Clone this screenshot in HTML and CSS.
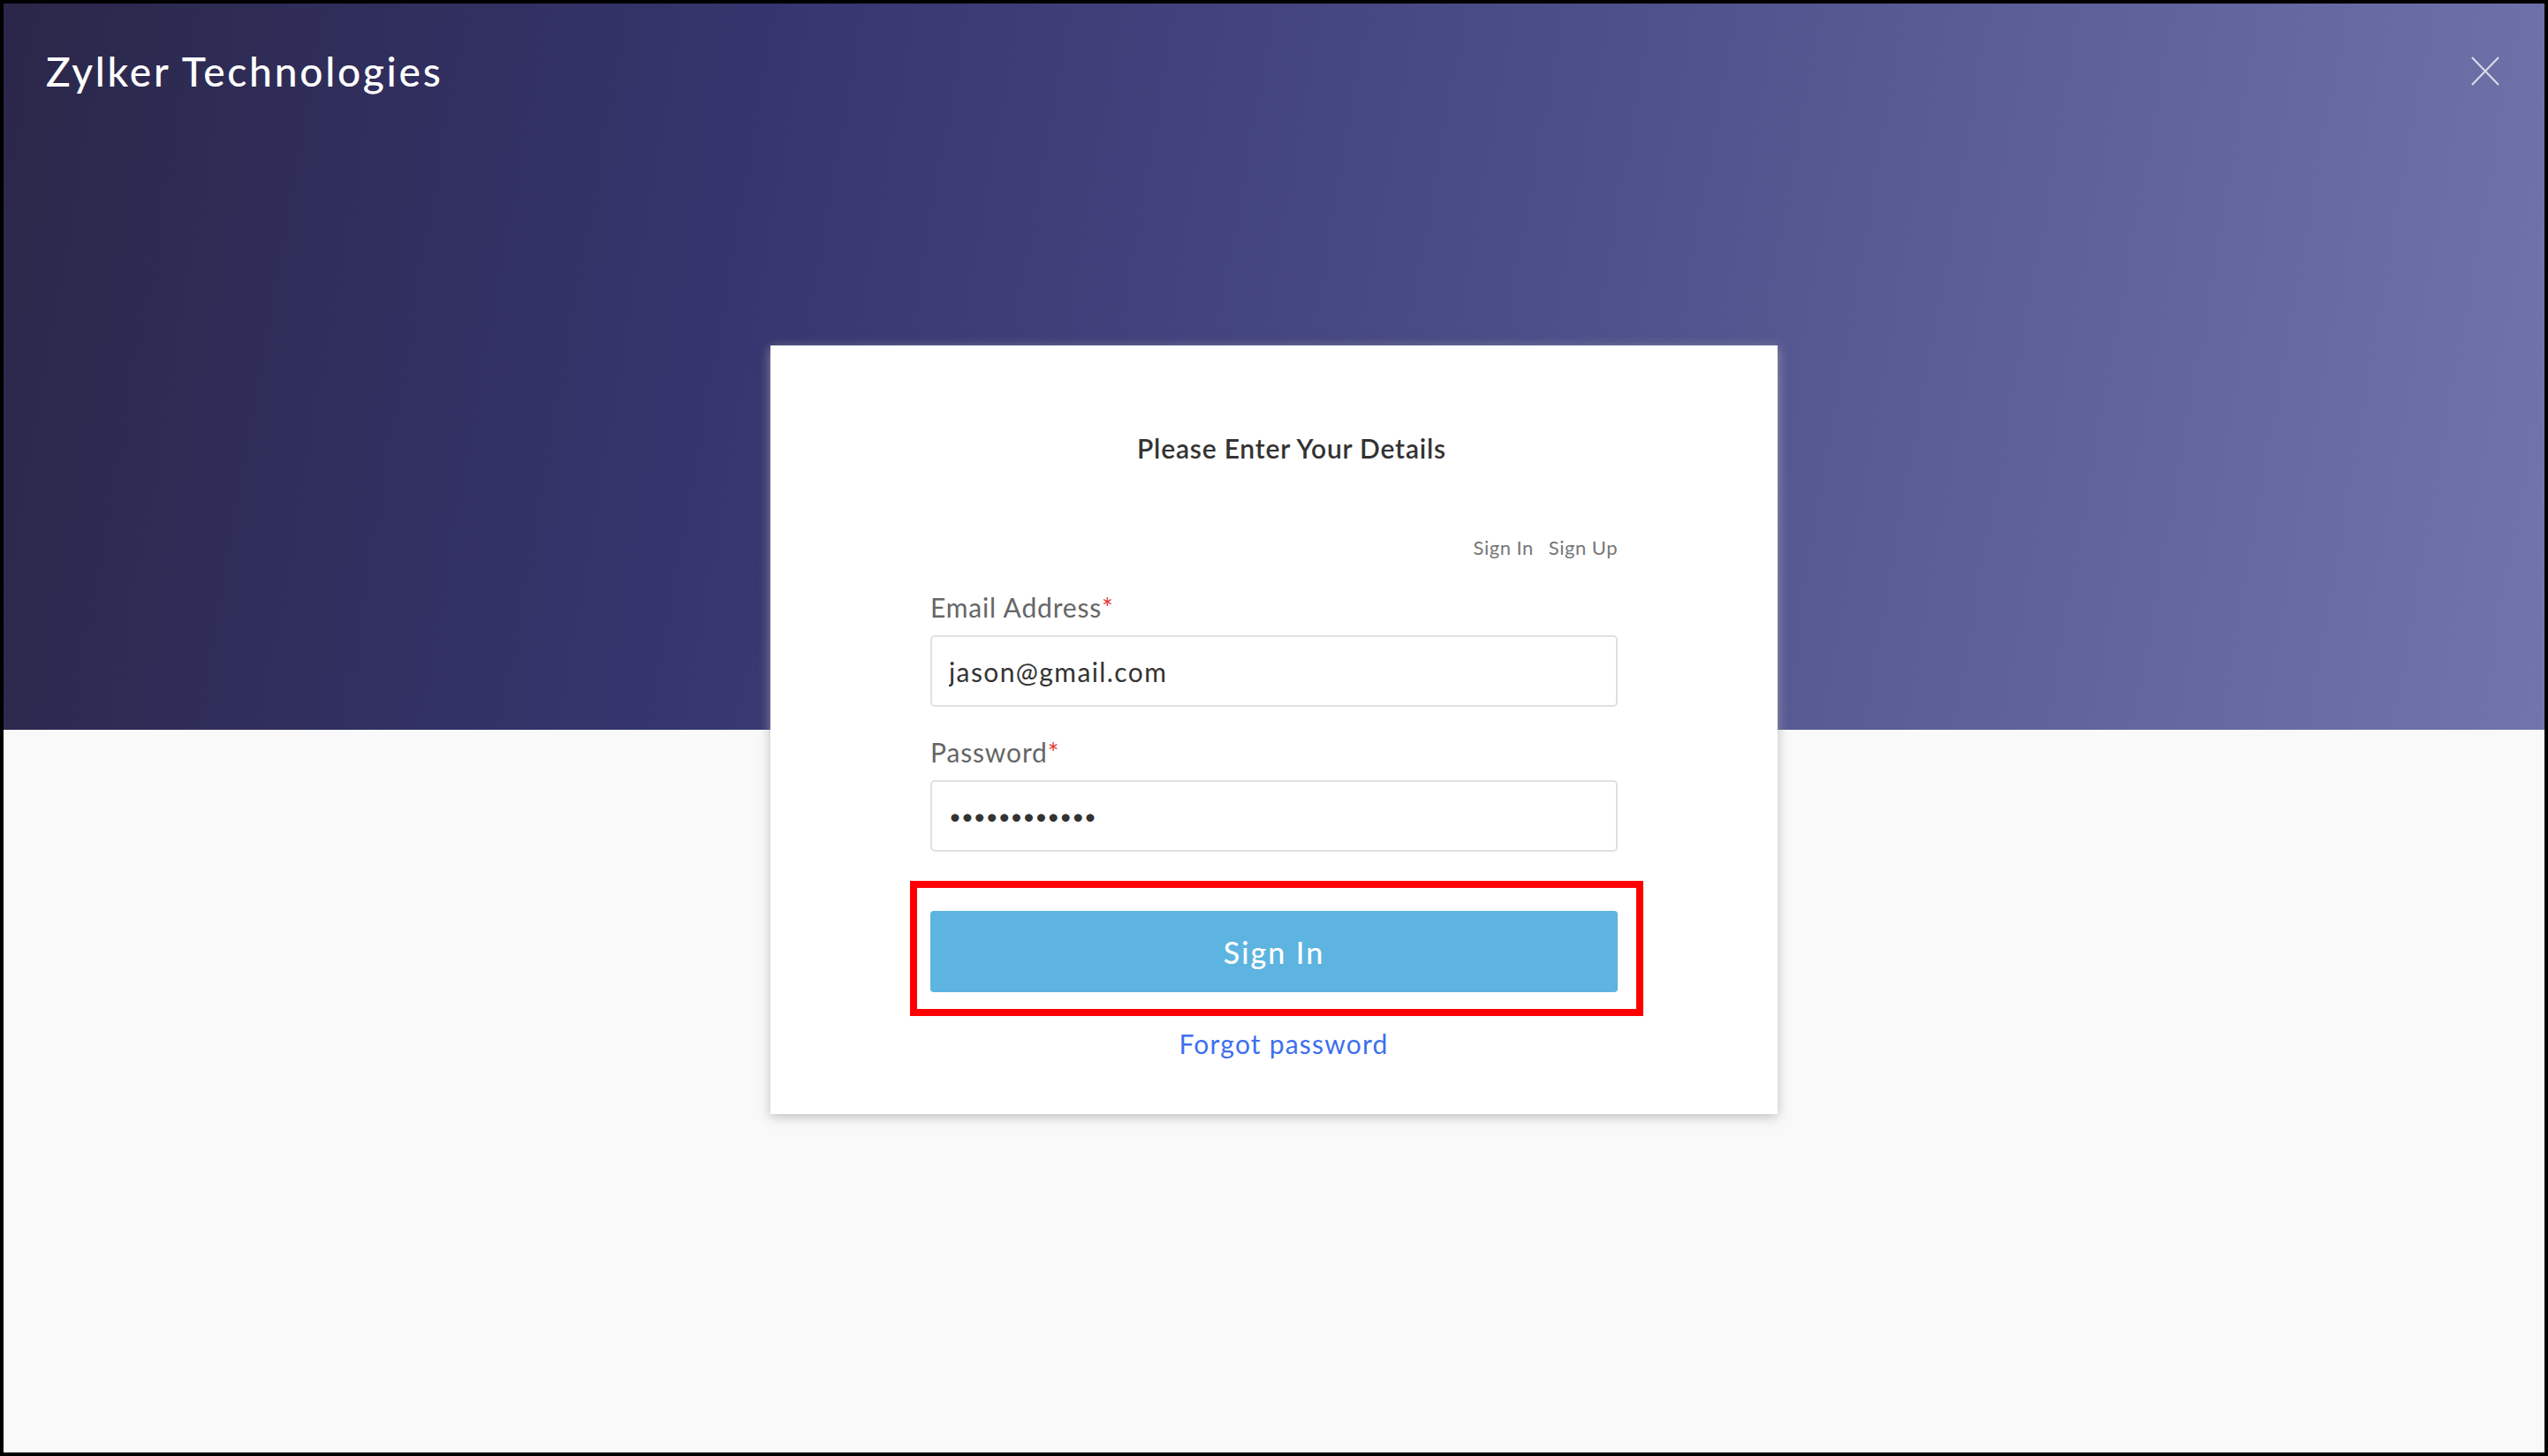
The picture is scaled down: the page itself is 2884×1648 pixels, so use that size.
FILE: index.html
```html
<!DOCTYPE html>
<html lang="en">
<head>
    <meta charset="UTF-8">
    <meta name="viewport" content="width=device-width, initial-scale=1.0">
    <title>Zylker Technologies</title>
    <link rel="stylesheet" href="styles.css">
</head>
<body>
    <div class="page">
        <header class="topbar">
            <div class="brand">Zylker Technologies</div>
            <button class="close-btn" aria-label="Close">
                <svg width="32" height="33" viewBox="0 0 32 33">
                    <line x1="1" y1="1" x2="31" y2="32" stroke="#dcdcee" stroke-width="2"/>
                    <line x1="31" y1="1" x2="1" y2="32" stroke="#dcdcee" stroke-width="2"/>
                </svg>
            </button>
        </header>

        <div class="login-card">
            <h2 class="card-title">Please Enter Your Details</h2>

            <div class="tabs">
                <span class="tab">Sign In</span>
                <span class="tab">Sign Up</span>
            </div>

            <label class="field-label">Email Address<span class="req">*</span></label>
            <input class="field-input" type="text" value="jason@gmail.com">

            <label class="field-label second">Password<span class="req">*</span></label>
            <input class="field-input pass" type="password" value="jason1234567">

            <div class="submit-wrap">
                <button class="submit-btn">Sign In</button>
                <div class="highlight"></div>
            </div>

            <a class="forgot" href="#">Forgot password</a>
        </div>
    </div>
</body>
</html>
```

FILE: styles.css
```css
html, body {
    margin: 0;
    height: 100%;
}

body {
    font-family: 'Lato', 'Open Sans', sans-serif;
    border: 4px solid #000;
    box-sizing: border-box;
}

.page {
    height: 100%;
    background:
        linear-gradient(100deg, #2b2749 0%, #363670 30%, #4d4f8a 60%, #7275ab 100%) top / 100% 822px no-repeat,
        #f9f9f9;
}

.topbar {
    display: flex;
    justify-content: space-between;
    align-items: flex-start;
    padding: 49px 51px 0 48px;
}

.brand {
    color: #fff;
    font-size: 46px;
    line-height: 55px;
    font-weight: 500;
    letter-spacing: 2.8px;
}

.close-btn {
    background: none;
    border: none;
    padding: 0;
    margin-top: 11px;
    cursor: pointer;
    display: flex;
}

.login-card {
    width: 1140px;
    box-sizing: border-box;
    margin: 283px auto 0;
    padding: 98px 181px 62px;
    background-color: #fff;
    box-shadow: 0 3px 12px rgba(170, 170, 170, 0.75);
    display: flex;
    flex-direction: column;
}

.card-title {
    margin: 0;
    padding-left: 40px;
    text-align: center;
    font-size: 30px;
    line-height: 36px;
    font-weight: 600;
    letter-spacing: 0.8px;
    color: #333;
}

.tabs {
    display: flex;
    justify-content: flex-end;
    gap: 17px;
    margin-top: 82px;
    font-size: 22px;
    line-height: 26px;
    letter-spacing: 0.5px;
    color: #777;
}

.field-label {
    margin-top: 36px;
    font-size: 30px;
    line-height: 36px;
    letter-spacing: 0.85px;
    color: #666;
}

.field-label.second {
    margin-top: 33px;
}

.req {
    color: #e53935;
}

.field-input {
    margin-top: 14px;
    height: 81px;
    box-sizing: border-box;
    border: 2px solid #e0e0e0;
    border-radius: 5px;
    padding: 0 19px;
    font-family: inherit;
    font-size: 30px;
    letter-spacing: 1.4px;
    color: #333;
    outline: none;
}

.field-input.pass {
    font-size: 24px;
    letter-spacing: 0;
}

.submit-wrap {
    position: relative;
    margin-top: 67px;
}

.submit-btn {
    width: 100%;
    height: 92px;
    border: none;
    border-radius: 4px;
    background-color: #5db4e0;
    color: #fff;
    font-family: inherit;
    font-size: 34px;
    font-weight: 500;
    letter-spacing: 2px;
    cursor: pointer;
}

.highlight {
    position: absolute;
    top: -34px;
    left: -23px;
    right: -29px;
    bottom: -27px;
    border: 8px solid #ff0000;
    pointer-events: none;
}

.forgot {
    margin-top: 40px;
    padding-left: 22px;
    text-align: center;
    font-size: 30px;
    line-height: 36px;
    letter-spacing: 1.2px;
    color: #3d6ff0;
    text-decoration: none;
}
```
